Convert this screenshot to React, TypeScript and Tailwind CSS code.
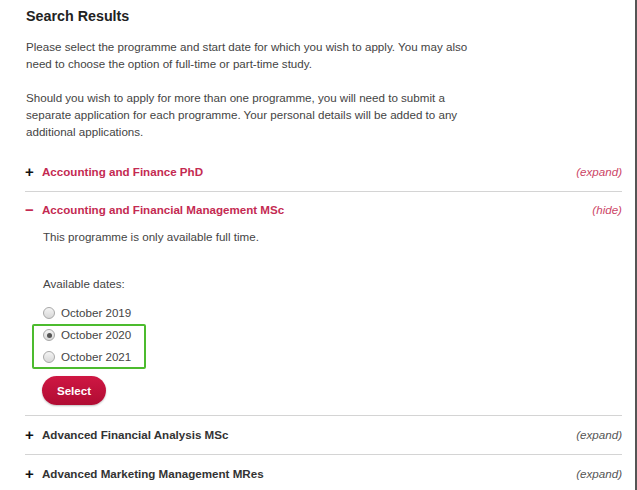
import React from "react";

function Radio({ checked, label }: { checked?: boolean; label: string }) {
  return (
    <div className="flex items-center h-[22px]">
      <span className="flex items-center justify-center w-[12px] h-[12px] rounded-full border border-[#a8a8a8] bg-gradient-to-b from-[#f4f4f4] to-[#d8d8d8]">
        {checked && <span className="w-[5px] h-[5px] rounded-full bg-[#555]" />}
      </span>
      <span className="ml-[6px] text-[11.6px] text-[#444]">{label}</span>
    </div>
  );
}

function Row({
  title,
  action,
  dark,
}: {
  title: string;
  action: string;
  dark?: boolean;
}) {
  return (
    <div className="flex items-center justify-between py-[10px] leading-[18px] border-b border-[#d4d4d4]">
      <div className="flex items-center">
        <span className="w-[17px] text-[15px] font-bold text-[#111] leading-[18px]">+</span>
        <span
          className={
            dark
              ? "text-[11.6px] font-bold text-[#333]"
              : "text-[11.6px] font-bold text-[#c42a52]"
          }
        >
          {title}
        </span>
      </div>
      <span
        className={
          !dark
            ? "text-[11.6px] italic text-[#cc4466]"
            : "text-[11.6px] italic text-[#555]"
        }
      >
        {action}
      </span>
    </div>
  );
}

export default function App() {
  return (
    <div
      className="w-[637px] h-[490px] bg-white border-r-2 border-[#555] pl-[25px] pr-[13px] pt-[6px] overflow-hidden"
      style={{ fontFamily: '"Liberation Sans", Arial, sans-serif' }}
    >
      <h1 className="text-[14.3px] font-bold text-[#222] leading-[20px] pl-[1px]">Search Results</h1>
      <p className="mt-[12px] text-[11.6px] leading-[17px] text-[#444] pl-[1px]">
        Please select the programme and start date for which you wish to apply. You may also
        <br />
        need to choose the option of full-time or part-time study.
      </p>
      <p className="mt-[17px] text-[11.6px] leading-[17px] text-[#444] pl-[1px]">
        Should you wish to apply for more than one programme, you will need to submit a
        <br />
        separate application for each programme. Your personal details will be added to any
        <br />
        additional applications.
      </p>

      <div className="mt-[13px]">
        <Row title="Accounting and Finance PhD" action="(expand)" />

        <div className="border-b border-[#d4d4d4] pb-[10px]">
          <div className="flex items-center justify-between pt-[9px] leading-[18px]">
            <div className="flex items-center">
              <span className="w-[17px] text-[15px] font-bold text-[#c42a52] leading-[18px]">−</span>
              <span className="text-[11.6px] font-bold text-[#c42a52]">
                Accounting and Financial Management MSc
              </span>
            </div>
            <span className="text-[11.6px] italic text-[#cc4466]">(hide)</span>
          </div>
          <div className="pl-[18px]">
            <p className="mt-[9px] text-[11.6px] leading-[17px] text-[#444]">
              This programme is only available full time.
            </p>
            <p className="mt-[30px] text-[11.6px] leading-[17px] text-[#444]">Available dates:</p>
            <div className="relative mt-[10px]">
              <Radio label="October 2019" />
              <Radio checked label="October 2020" />
              <Radio label="October 2021" />
              <div className="absolute left-[-11px] top-[22px] w-[114px] h-[45px] border-2 border-[#4cbb2e] rounded-[2px]" />
            </div>
            <button className="mt-[8px] ml-[-1px] w-[64px] h-[29px] rounded-full bg-gradient-to-b from-[#cf1743] to-[#b00c33] text-white text-[11.6px] font-bold shadow-[0_1px_2px_rgba(0,0,0,0.25)]">
              Select
            </button>
          </div>
        </div>

        <Row title="Advanced Financial Analysis MSc" action="(expand)" dark />
        <Row title="Advanced Marketing Management MRes" action="(expand)" dark />
      </div>
    </div>
  );
}
